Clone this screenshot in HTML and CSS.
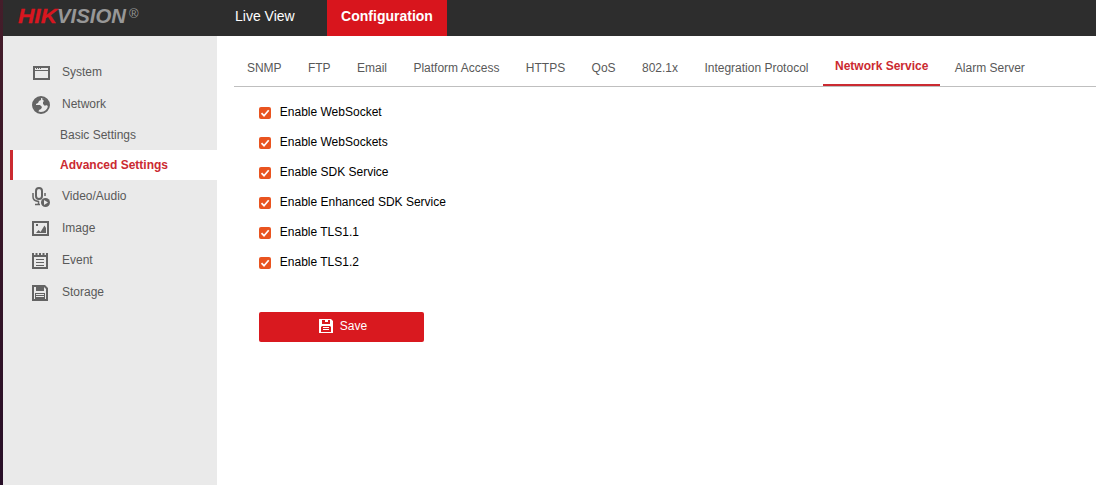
FILE: index.html
```html
<!DOCTYPE html>
<html lang="en">
<head>
<meta charset="utf-8">
<title>Configuration</title>
<link rel="stylesheet" href="styles.css">
</head>
<body>
<div class="edge"></div>
<div class="app">
  <header class="header">
    <svg class="logo" viewBox="0 0 140 36" width="140" height="36" role="img" aria-label="HIKVISION">
      <g class="logo-word">
        <text class="logo-red" x="15" y="23" textLength="39" lengthAdjust="spacingAndGlyphs">HIK</text>
        <text class="logo-gray" x="54" y="23" textLength="69" lengthAdjust="spacingAndGlyphs">VISION</text>
      </g>
      <text class="logo-reg" x="126" y="18">®</text>
    </svg>
    <nav class="main-nav">
      <a class="main-link">Live View</a>
      <a class="main-link main-active">Configuration</a>
    </nav>
  </header>
  <div class="body">
    <aside class="sidebar">
      <a class="item"><svg class="icon" viewBox="0 0 18 18"><path class="line" d="M2 3h15v12H2z"/><path d="M3 6h13v1H3zM4 4h1v1H4zM6 4h1v1H6zM8 4h1v1H8z"/></svg>System</a>
      <a class="item"><svg class="icon" viewBox="0 0 18 18"><circle class="line" cx="9" cy="9" r="8"/><path d="M2 5l4-3 3 0 0 2-2 1-1 2-2 1 0 1 4 0 2 2-1 2-2 1-1 3-3-3-2-5zM11 2l4 2 2 4-1 2-2-1-1 1-2-2 0-2 1-1-2-2z"/></svg>Network</a>
      <a class="sub">Basic Settings</a>
      <a class="sub sub-active">Advanced Settings</a>
      <a class="item"><svg class="icon icon-wide" viewBox="0 0 20 20"><rect class="line" x="4" y="1" width="6" height="11" rx="3"/><path class="line thin" d="M1 6v4q0 4 6 4.500M13 6v3M3 17.500h5M6.500 14v4"/><circle cx="13.500" cy="15.500" r="4.500"/><path class="cut" d="M12 13v5l4-2.500z"/></svg>Video/Audio</a>
      <a class="item"><svg class="icon" viewBox="0 0 18 18"><path class="line" d="M1 2h15v13H1z"/><path d="M4 13l2.500-3 2 2L12.500 5.500 14 8v5zM4 4h2v2H4z"/></svg>Image</a>
      <a class="item"><svg class="icon" viewBox="0 0 18 18"><path class="line" d="M1 4h14v12H1z"/><path d="M0 1h2v3H0zM3.500 1h2v3h-2zM7 1h2v3H7zM10.500 1h2v3h-2zM14 1h2v3h-2zM4 7h8v1H4zM4 10h8v1H4zM4 13h8v1H4z"/></svg>Event</a>
      <a class="item"><svg class="icon" viewBox="0 0 18 18"><path fill-rule="evenodd" d="M0 1h13l3 3v13H0zM2 3v12h12V5l-2-2v4H4V3z"/><path d="M5 3h2v3H5zM9 3h2v3H9z"/><path fill-rule="evenodd" d="M3 9h10v6H3zM4 10v1h8v-1zM4 12v1h8v-1z"/></svg>Storage</a>
    </aside>
    <main class="content">
      <nav class="tabs">
        <a class="tab">SNMP</a><a class="tab">FTP</a><a class="tab">Email</a><a class="tab">Platform Access</a><a class="tab">HTTPS</a><a class="tab">QoS</a><a class="tab">802.1x</a><a class="tab">Integration Protocol</a><a class="tab tab-active">Network Service</a><a class="tab">Alarm Server</a>
      </nav>
      <form class="options">
        <label class="option"><svg class="check" viewBox="0 0 12 12"><path d="M2.500 6.200l2.500 2.500L9.700 3.200"/></svg>Enable WebSocket</label>
        <label class="option"><svg class="check" viewBox="0 0 12 12"><path d="M2.500 6.200l2.500 2.500L9.700 3.200"/></svg>Enable WebSockets</label>
        <label class="option"><svg class="check" viewBox="0 0 12 12"><path d="M2.500 6.200l2.500 2.500L9.700 3.200"/></svg>Enable SDK Service</label>
        <label class="option"><svg class="check" viewBox="0 0 12 12"><path d="M2.500 6.200l2.500 2.500L9.700 3.200"/></svg>Enable Enhanced SDK Service</label>
        <label class="option"><svg class="check" viewBox="0 0 12 12"><path d="M2.500 6.200l2.500 2.500L9.700 3.200"/></svg>Enable TLS1.1</label>
        <label class="option"><svg class="check" viewBox="0 0 12 12"><path d="M2.500 6.200l2.500 2.500L9.700 3.200"/></svg>Enable TLS1.2</label>
        <button class="save" type="button"><svg class="save-icon" viewBox="0 0 14 14"><path fill-rule="evenodd" d="M0 0h12l2 2v12H0zM3 1v4h8V1H9v2H6V1zM2 8v5h10V8l-1-1H3z"/><path d="M4 8h6v1H4zM4 10h6v1H4z"/></svg>Save</button>
      </form>
    </main>
  </div>
</div>
</body>
</html>
```
FILE: styles.css
```css
* { box-sizing: border-box; }
body {
  margin: 0;
  display: flex;
  height: 100vh;
  overflow: hidden;
  background: #fff;
  font: 12px/16px "Liberation Sans", Arial, sans-serif;
  color: #595959;
}
.edge { width: 3px; background: linear-gradient(#451d2a, #3a1728 40%, #280f28); }
.app { flex: 1; display: flex; flex-direction: column; }
.header { display: flex; height: 36px; background: #2d2d2d; }
.logo { display: block; flex: none; }
.logo-word { font: italic bold 19.5px "Liberation Sans", Arial, sans-serif; }
.logo-red { fill: #d8161f; stroke: #d8161f; stroke-width: .3; }
.logo-gray { fill: #979797; }
.logo-reg { fill: #979797; font-size: 13px; }
.main-nav { display: flex; padding-left: 78px; }
.main-link {
  width: 106px;
  height: 36px;
  padding: 7px 0 0 14px;
  font-size: 14px;
  line-height: 18px;
  color: #fff;
}
.main-active {
  width: 120px;
  padding-left: 0;
  background: #d8151d;
  font-weight: bold;
  text-align: center;
}
.body { flex: 1; display: flex; }
.sidebar { width: 214px; padding-top: 20px; background: #eaeaea; }
.item { display: flex; align-items: center; height: 32px; padding-left: 29px; }
.icon { width: 18px; height: 18px; margin: 2px 12px 0 0; fill: #646464; }
.icon-wide { width: 20px; height: 20px; margin-right: 10px; }
.line { fill: none; stroke: #646464; stroke-width: 2; }
.thin { stroke-width: 1.5; }
.cut { fill: #eaeaea; }
.sub { display: block; height: 30px; padding: 7px 0 0 57px; }
.sub-active {
  margin-left: 7px;
  padding-left: 47px;
  border-left: 3px solid #cb2a31;
  background: #fff;
  color: #cb2a31;
  font-weight: bold;
}
.content { flex: 1; padding: 18px 0 0 17px; }
.tabs { display: flex; height: 33px; border-bottom: 1px solid #bfbfbf; }
.tab { height: 32px; padding: 6px 13.5px 0 12.900px; white-space: nowrap; }
.tab-active {
  padding: 4px 12px 0;
  margin: 0 1.6px 0 1px;
  border-bottom: 2px solid #cb2a31;
  color: #cb2a31;
  font-weight: bold;
}
.options { padding: 10px 0 0 25px; color: #000; }
.option { display: flex; align-items: center; height: 30px; }
.check { width: 12px; height: 12px; margin: 2px 8.800px 0 0; border-radius: 2px; background: #e95420; }
.check path { fill: none; stroke: #fff; stroke-width: 1.7; }
.save {
  display: flex;
  align-items: center;
  justify-content: center;
  width: 165px;
  height: 30px;
  margin-top: 35px;
  padding: 0 0 2px 3px;
  border: 0;
  border-radius: 2px;
  background: #d9191f;
  color: #fff;
  font: inherit;
}
.save-icon { width: 14px; height: 14px; margin-right: 7px; fill: #fff; }
```
